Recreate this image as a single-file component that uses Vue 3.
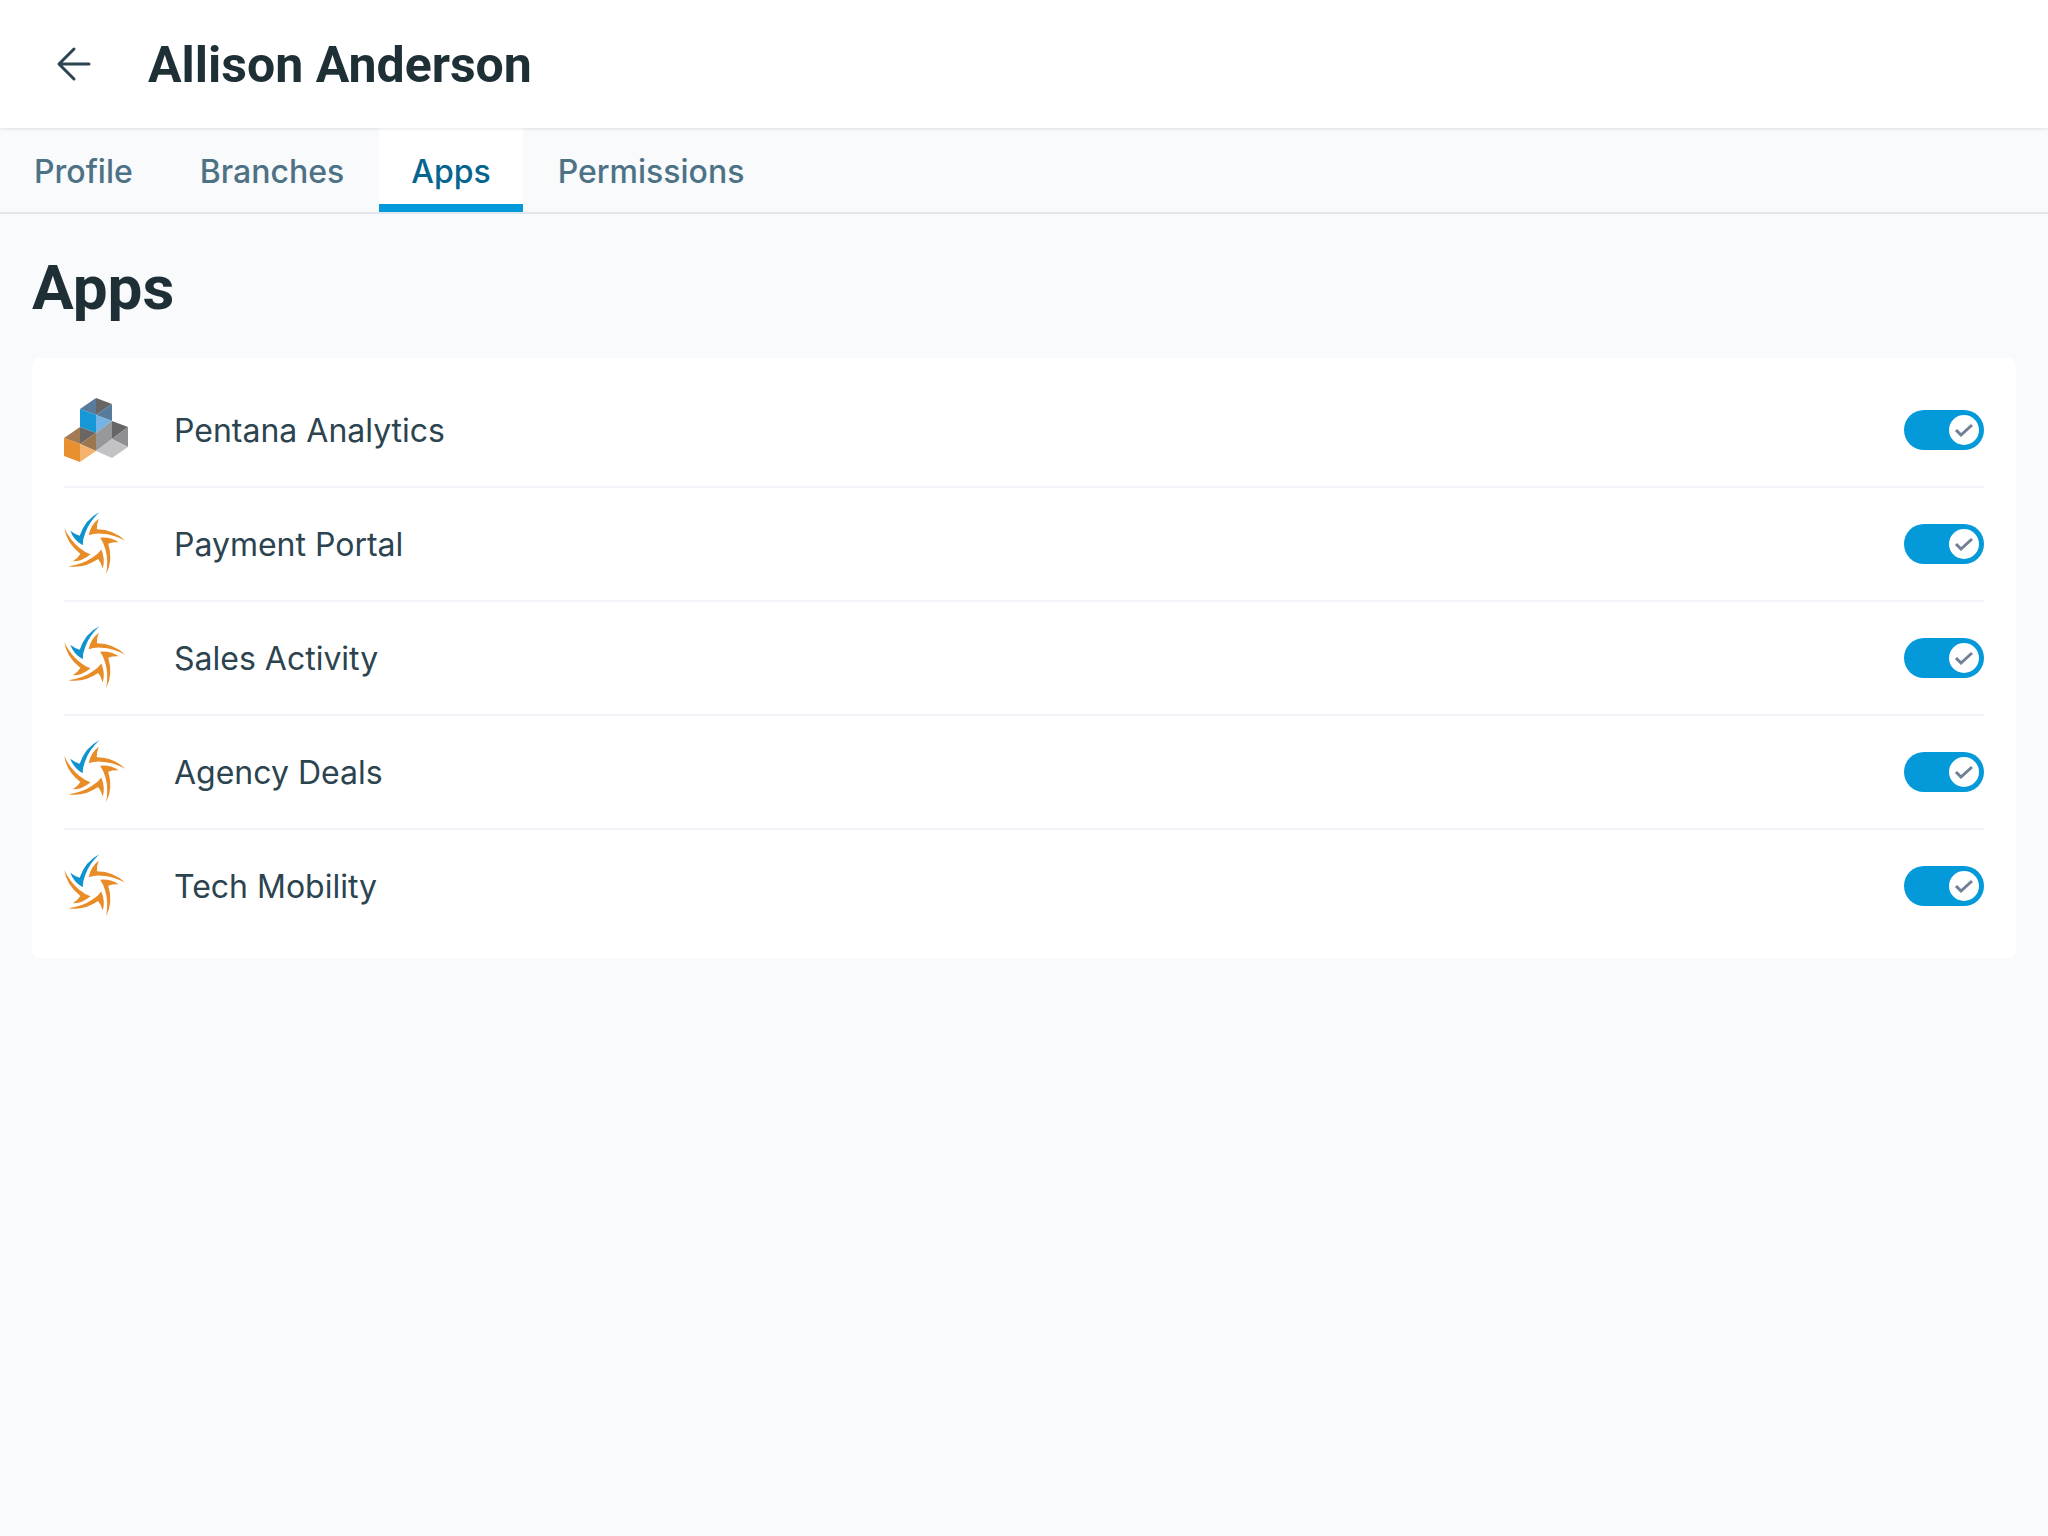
<template>
  <div class="page">

    <!-- Header -->
    <header class="header">
      <button class="back" type="button" aria-label="Back">
        <svg viewBox="0 0 36 36" aria-hidden="true">
          <path d="M33 18H3M18 3L3 18L18 33" />
        </svg>
      </button>
      <h1 class="name">Allison Anderson</h1>
    </header>

    <!-- Tabs -->
    <nav class="tabs">
      <a
        v-for="tab in tabs"
        :key="tab"
        href="#"
        class="tab"
        :class="{ 'tab-active': tab === activeTab }"
        @click.prevent="activeTab = tab"
      >{{ tab }}</a>
    </nav>

    <main class="content">
      <h2 class="title">Apps</h2>

      <ul class="card">
        <li v-for="app in apps" :key="app.id" class="row">
          <svg v-if="app.icon === 'cubes'" class="logo" viewBox="0 0 64 64" aria-hidden="true">
            <polygon points="32,0 16,11 32,17" fill="#587a9b" />
            <polygon points="32,0 48,6 32,17" fill="#666666" />
            <polygon points="48,6 48,23 32,17" fill="#587a9b" />
            <polygon points="32,17 48,23 32,35" fill="#74b3e3" />
            <polygon points="16,11 32,17 32,35 16,29" fill="#1598d5" />
            <polygon points="16,29 16,46 0,40" fill="#a17b55" />
            <polygon points="16,29 32,35 16,46" fill="#6a6663" />
            <polygon points="32,35 32,53 16,46" fill="#9b7751" />
            <polygon points="16,46 32,53 16,64" fill="#f5b26d" />
            <polygon points="0,40 16,46 16,64 0,58" fill="#e8902f" />
            <polygon points="32,35 48,23 48,41 32,53" fill="#979899" />
            <polygon points="48,23 64,29 48,41" fill="#666666" />
            <polygon points="64,29 64,49 48,41" fill="#8f8f91" />
            <polygon points="48,41 64,49 48,60 32,53" fill="#c2c2c4" />
          </svg>
          <svg v-else class="logo" viewBox="30 24 192 192" aria-hidden="true">
            <path
              v-for="n in 5"
              :key="n"
              :d="blade"
              :fill="n === 1 ? '#0f93cf' : '#e88c28'"
              :transform="`rotate(${(n - 1) * 72} 116 121)`"
            />
          </svg>

          <label class="label" :for="app.id">{{ app.name }}</label>

          <span class="switch">
            <input :id="app.id" v-model="app.enabled" type="checkbox" role="switch" class="switch-input" />
            <span class="knob">
              <svg v-if="app.enabled" viewBox="0 0 30 30" aria-hidden="true">
                <path d="M7 15L12 20L23 10" />
              </svg>
            </span>
          </span>
        </li>
      </ul>
    </main>
  </div>
</template>

<script setup>
import { ref } from 'vue'

const tabs = ['Profile', 'Branches', 'Apps', 'Permissions']
const activeTab = ref('Apps')

const apps = ref([
  { id: 'pentana-analytics', name: 'Pentana Analytics', icon: 'cubes', enabled: true },
  { id: 'payment-portal', name: 'Payment Portal', icon: 'star', enabled: true },
  { id: 'sales-activity', name: 'Sales Activity', icon: 'star', enabled: true },
  { id: 'agency-deals', name: 'Agency Deals', icon: 'star', enabled: true },
  { id: 'tech-mobility', name: 'Tech Mobility', icon: 'star', enabled: true },
])

// one arm of the star logo, repeated every 72 degrees
const blade = 'M136 25Q94 46 77 95Q64 92 49 80Q58 107 86 124Q86 105 94 86Q106 53 136 25Z'
</script>

<style>
body { margin: 0; background: #f8fafc; }
</style>

<style scoped>
.page {
  min-height: 100vh;
  background: #f8fafc; color: #2c444f;
  font-family: Inter, 'Liberation Sans', sans-serif;
}

/* Header */
.header {
  position: relative; z-index: 1;
  display: flex; align-items: center; gap: 40px;
  height: 128px; padding: 0 40px; box-sizing: border-box;
  background: #fff; box-shadow: 0 1px 3px rgba(30,50,60,0.12);
}
.back {
  display: flex; align-items: center; justify-content: center;
  width: 68px; height: 68px; padding: 0;
  background: none; border: 0; cursor: pointer;
}
.back svg {
  width: 36px; height: 36px;
  fill: none; stroke: #2c444f; stroke-width: 3; stroke-linecap: round; stroke-linejoin: round;
}
.name, .title { margin: 0; font-family: Roboto, Inter, sans-serif; font-weight: 700; color: #1e2f36; }
.name { padding-top: 2px; font-size: 50px; line-height: 64px; }

/* Tabs */
.tabs { display: flex; gap: 3px; padding-left: 2px; border-bottom: 2px solid #dde7ed; }
.tab {
  padding: 24px 32px 12px;
  border-bottom: 8px solid transparent;
  font-size: 32px; line-height: 40px; font-weight: 500;
  color: #4d7185; text-decoration: none;
}
.tab-active { background: #fff; border-color: #0499d9; color: #06658f; }

/* Content */
.content { padding: 38px 32px; }
.title { margin-bottom: 34px; font-size: 62px; line-height: 72px; }
.card {
  margin: 0; padding: 16px 32px; list-style: none;
  background: #fff; border-radius: 8px;
}
.row { display: flex; align-items: center; height: 112px; }
.row + .row { border-top: 2px solid #f1f5fa; }
.logo { width: 64px; height: 64px; flex-shrink: 0; }
.label {
  flex: 1; margin-left: 46px; padding-top: 2px;
  font-size: 32px; line-height: 40px; cursor: pointer;
}

/* Switch */
.switch { position: relative; width: 80px; height: 40px; flex-shrink: 0; }
.switch-input {
  appearance: none; display: block;
  width: 100%; height: 100%; margin: 0;
  background: #b8c6cf; border-radius: 20px; cursor: pointer;
}
.switch-input:checked { background: #0499d9; }
.knob {
  position: absolute; top: 5px; left: 5px;
  width: 30px; height: 30px;
  background: #fff; border-radius: 50%; pointer-events: none;
}
.switch-input:checked + .knob { left: auto; right: 5px; }
.knob svg {
  display: block; width: 30px; height: 30px;
  fill: none; stroke: #718096; stroke-width: 3;
}
</style>
